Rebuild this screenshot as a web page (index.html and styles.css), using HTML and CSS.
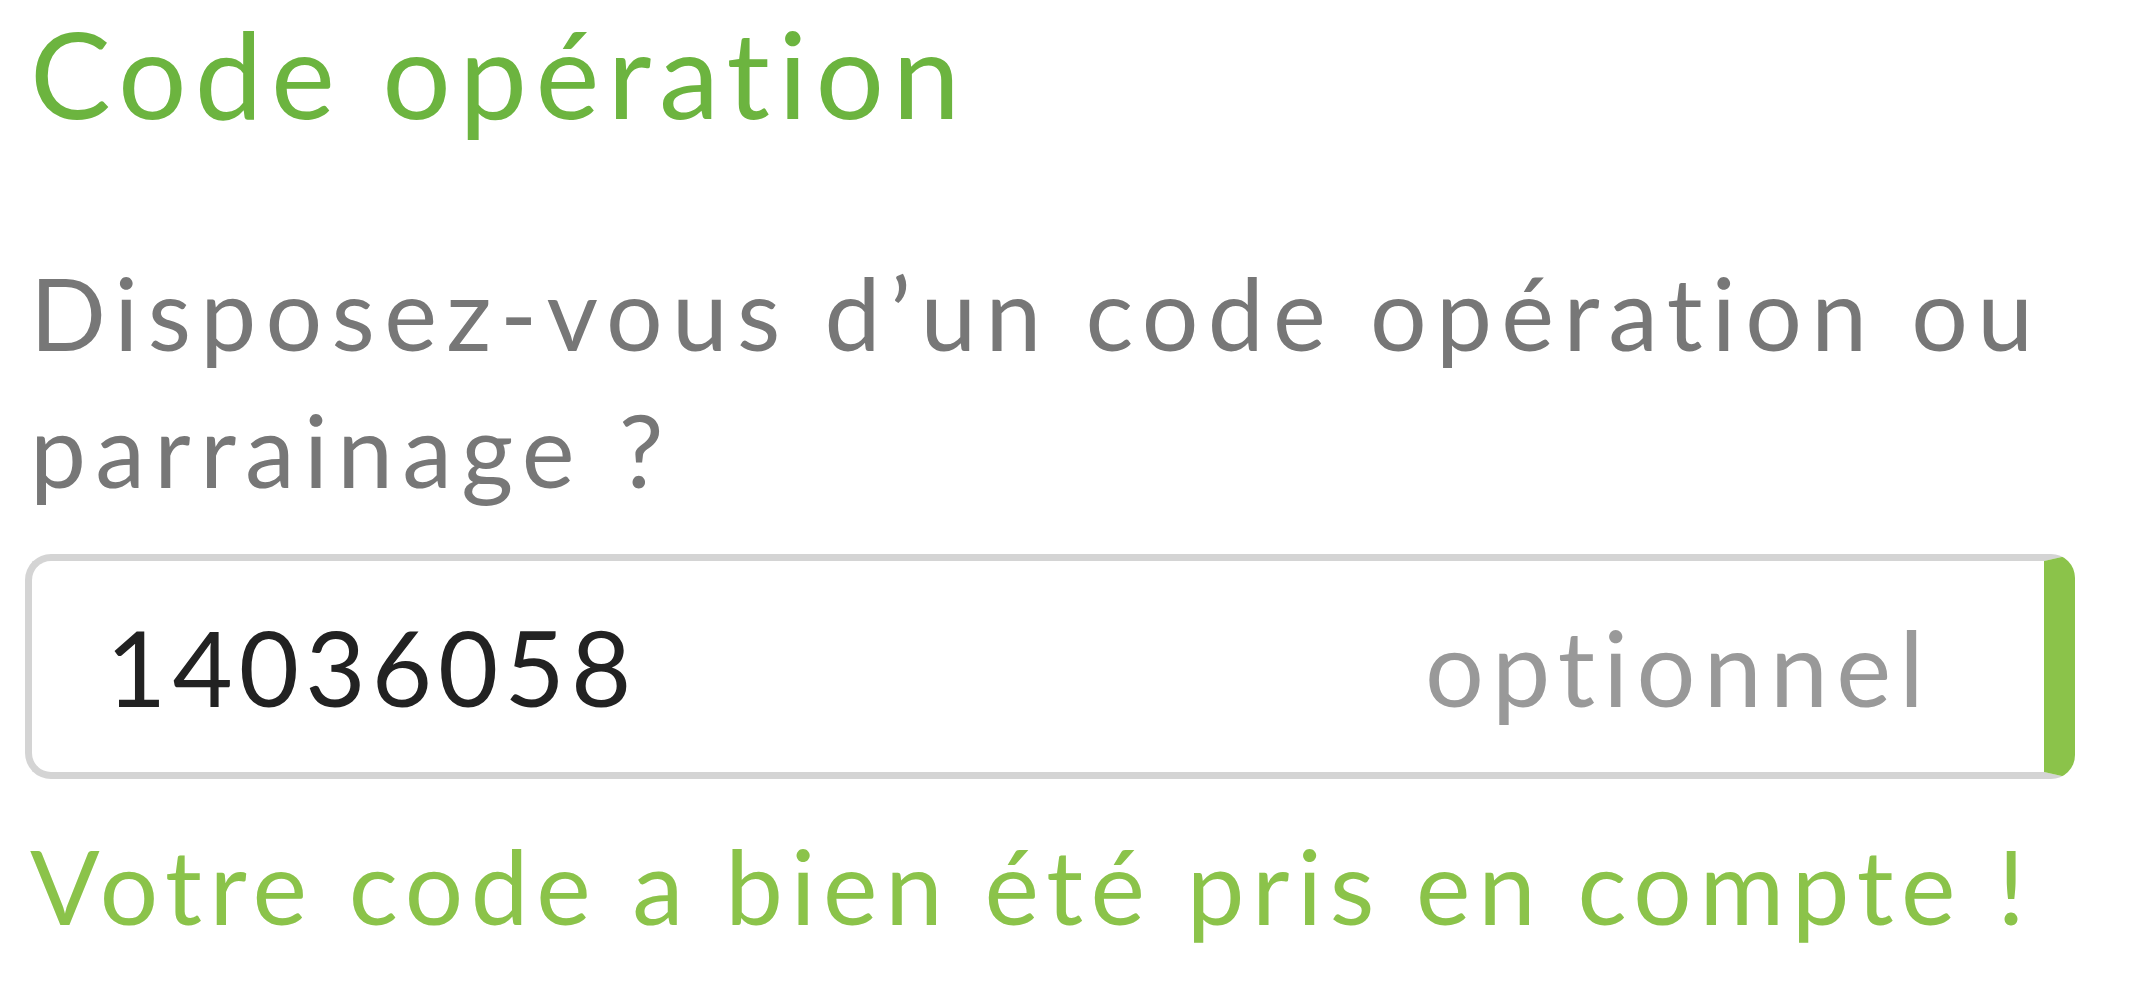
FILE: index.html
```html
<!DOCTYPE html>
<html lang="fr">
<head>
<meta charset="UTF-8" />
<meta name="viewport" content="width=device-width, initial-scale=1" />
<title>Code opération</title>
<link rel="stylesheet" href="styles.css">
</head>
<body>

<div class="promo">
  <h2 class="promo-title">Code opération</h2>
  <p class="promo-question">Disposez-vous d’un code opération ou parrainage ?</p>

  <div class="field valid">
    <input class="field-input" type="text" value="14036058" />
    <span class="field-hint">optionnel</span>
  </div>

  <p class="promo-success">Votre code a bien été pris en compte !</p>
</div>

</body>
</html>
```

FILE: styles.css
```css
body {
  margin: 0;
  background: #fff;
  font-family: Lato, 'Noto Sans', sans-serif;
  font-variant-ligatures: none;
}

.promo {
  padding: 0 61px 0 25px;
}

.promo-title {
  margin: 0;
  font-size: 121px;
  line-height: 145px;
  font-weight: 400;
  letter-spacing: 8.3px;
  color: #6cb43f;
  padding-left: 5px;
}

.promo-question {
  margin: 99px 0 0;
  font-size: 100px;
  line-height: 137px;
  letter-spacing: 9.3px;
  color: #777;
  padding-left: 5px;
}

.field {
  margin-top: 36px;
  display: flex;
  align-items: center;
  height: 211px;
  border: 7px solid #d4d4d4;
  border-right: 31px solid #8bc34a;
  border-radius: 26px 24px 24px 26px;
  background: #fff;
}

.field-input {
  flex: 1;
  min-width: 0;
  border: none;
  outline: none;
  background: transparent;
  padding: 0 0 0 74px;
  font-family: inherit;
  font-size: 104px;
  letter-spacing: 6.1px;
  line-height: 211px;
  height: 211px;
  color: #222;
}

.field-hint {
  padding-right: 112px;
  font-size: 104px;
  letter-spacing: 8.2px;
  line-height: 211px;
  color: #999;
}

.promo-success {
  margin: 38px 0 0;
  font-size: 103px;
  line-height: 136px;
  letter-spacing: 7.7px;
  color: #8bc34a;
  padding-left: 5px;
}
```
